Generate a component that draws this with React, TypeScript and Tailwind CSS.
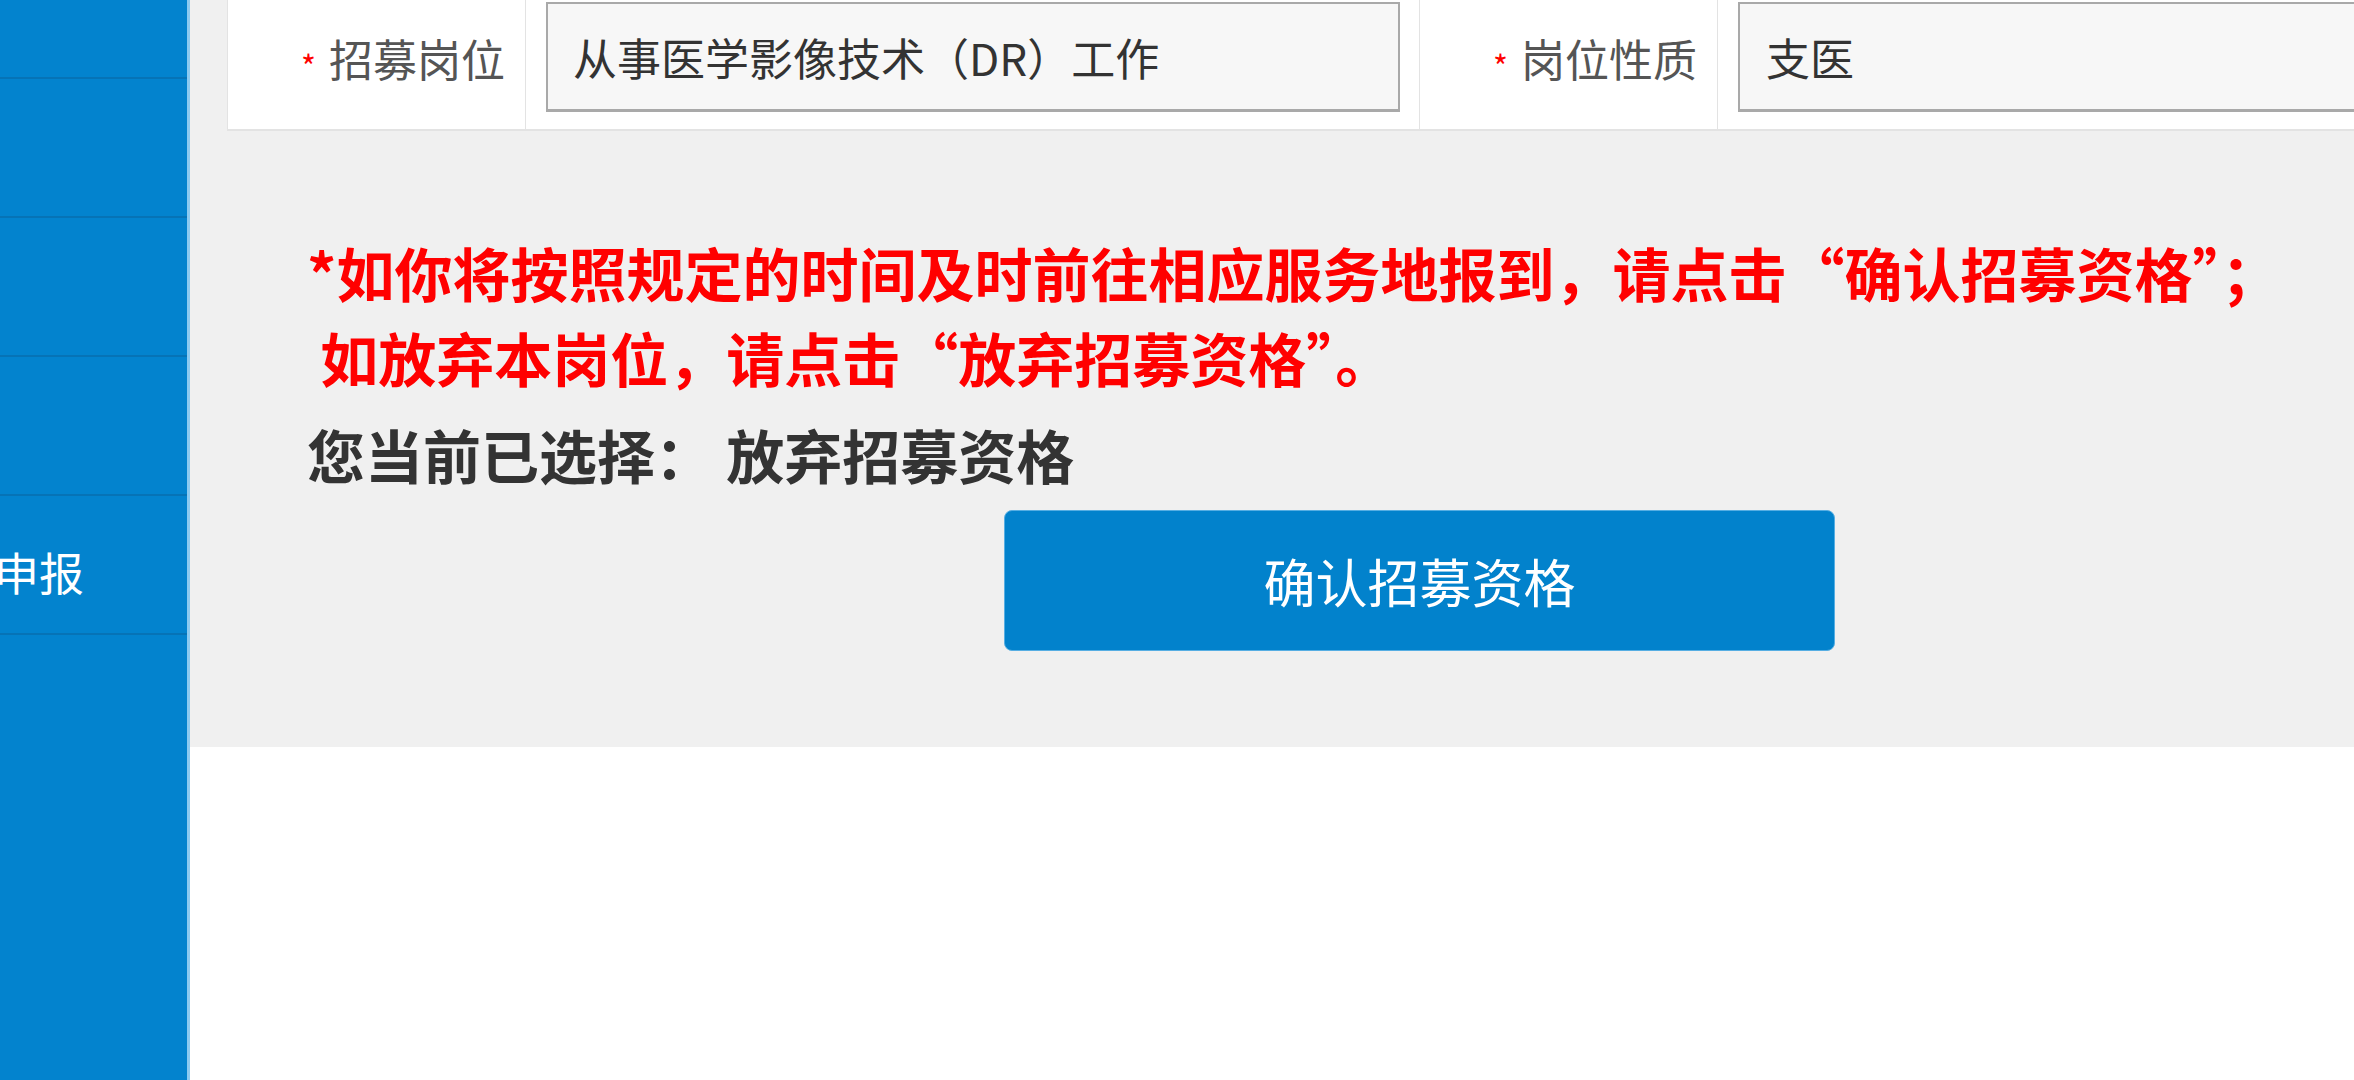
import React from "react";

const sideItems = ["", "", "", "资格申报"];

function FieldLabel({ text }: { text: string }) {
  return (
    <div className="flex h-full w-[298px] shrink-0 items-start justify-end border-r border-[#e3e3e3] pr-[20px] pt-[36px]">
      <span className="mr-[13px] mt-[13px] text-[32px] leading-none text-[#f00]">*</span>
      <span className="text-[44px] leading-none text-[#555]">{text}</span>
    </div>
  );
}

export default function App() {
  return (
    <div className="flex h-[1080px] w-[2354px] overflow-hidden bg-white font-['Noto_Sans_CJK_SC','Noto_Sans',sans-serif]">
      <aside className="w-[190px] shrink-0 overflow-hidden border-r-[3px] border-[#8ccaf0] bg-[#0383ce]">
        <div className="h-[79px] border-b-2 border-[#0673b6]" />
        {sideItems.map((label, i) => (
          <div
            key={i}
            className="flex h-[139px] items-center justify-end border-b-2 border-[#0673b6] pr-[103px] pt-[14px]"
          >
            <span className="whitespace-nowrap text-[45px] leading-none text-white">{label}</span>
          </div>
        ))}
      </aside>

      <main className="min-w-0 flex-1 overflow-hidden">
        <section className="h-[747px] bg-[#f0f0f0] pl-[37px]">
          <div className="flex h-[131px] w-[2300px] border-b-2 border-l border-[#e3e3e3] bg-white">
            <FieldLabel text="招募岗位" />
            <div className="h-full w-[894px] shrink-0 border-r border-[#e3e3e3] pl-[20px] pr-[19px] pt-[2px]">
              <div className="flex h-[110px] items-center border-2 border-b-[3px] border-[#a9a9a9] bg-[#f7f7f7] pl-[25px]">
                <span className="whitespace-nowrap text-[44px] leading-none text-[#333]">
                  从事医学影像技术（DR）工作
                </span>
              </div>
            </div>
            <FieldLabel text="岗位性质" />
            <div className="h-full flex-1 pl-[20px] pt-[2px]">
              <div className="flex h-[110px] items-center border-2 border-b-[3px] border-[#a9a9a9] bg-[#f7f7f7] pl-[26px]">
                <span className="text-[44px] leading-none text-[#333]">支医</span>
              </div>
            </div>
          </div>

          <div className="pl-[80px] pt-[99px]">
            <p className="whitespace-pre text-[58px] font-bold leading-[85px] text-[#f00]">
              {"*如你将按照规定的时间及时前往相应服务地报到，请点击“确认招募资格”；\n 如放弃本岗位，请点击“放弃招募资格”。"}
            </p>
            <p className="mt-[12px] whitespace-pre text-[58px] font-bold leading-[85px] text-[#333]">
              {"您当前已选择： 放弃招募资格"}
            </p>
          </div>

          <button className="ml-[777px] mt-[13px] flex h-[141px] w-[831px] items-center justify-center rounded-[8px] border border-[#56aee3] bg-[#0282cc] text-[52px] leading-none text-white">
            确认招募资格
          </button>
        </section>
      </main>
    </div>
  );
}
